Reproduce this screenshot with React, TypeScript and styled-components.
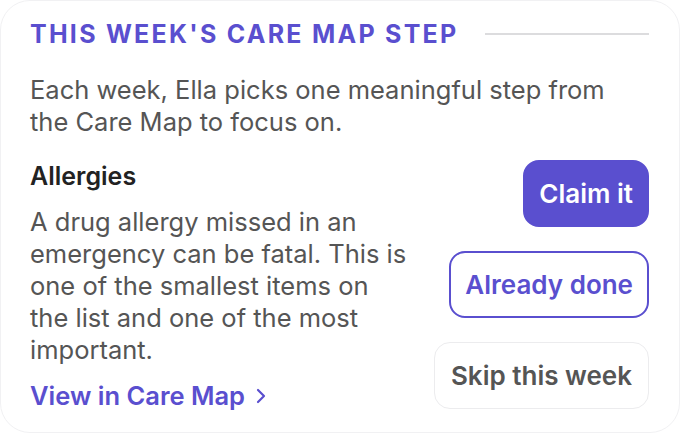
import React from "react";
import styled, { createGlobalStyle } from "styled-components";

const Global = createGlobalStyle`
  html, body { margin: 0; padding: 0; background: #ffffff; }
  body { font-family: Inter, "Noto Sans", sans-serif; -webkit-font-smoothing: antialiased; }
  * { box-sizing: border-box; }
`;

const Card = styled.section`
  width: 680px;
  height: 433px;
  background: #ffffff;
  border: 1px solid #f1f1f3;
  border-radius: 30px;
  padding: 17px 30px 0 29px;
  display: flex;
  flex-direction: column;
`;

const Header = styled.div`
  display: flex;
  align-items: center;
  gap: 26px;
`;

const Eyebrow = styled.h2`
  margin: 0;
  font-size: 25px;
  line-height: 32px;
  font-weight: 700;
  letter-spacing: 2.25px;
  color: #5a4fcf;
  white-space: nowrap;
`;

const Rule = styled.div`
  flex: 1;
  height: 2px;
  background: #dcdcde;
`;

const Intro = styled.p`
  margin: 24px 0 0;
  max-width: 600px;
  font-size: 25.5px;
  line-height: 32px;
  color: #555555;
`;

const Body = styled.div`
  display: flex;
  justify-content: space-between;
  margin-top: 22px;
`;

const Details = styled.div`
  width: 382px;
  display: flex;
  flex-direction: column;
  align-items: flex-start;
`;

const ItemTitle = styled.h3`
  margin: 1px 0 0;
  font-size: 25px;
  line-height: 30px;
  font-weight: 600;
  color: #222222;
`;

const Description = styled.p`
  margin: 15px 0 0;
  font-size: 25.5px;
  line-height: 32px;
  color: #555555;
`;

const MapLink = styled.a`
  margin-top: 15px;
  display: inline-flex;
  align-items: center;
  gap: 11px;
  font-size: 25.5px;
  line-height: 30px;
  font-weight: 600;
  color: #5a4fcf;
  text-decoration: none;
`;

const Actions = styled.div`
  display: flex;
  flex-direction: column;
  align-items: flex-end;
  gap: 24px;
`;

type Variant = "primary" | "outline" | "ghost";

const ActionButton = styled.button<{ $variant: Variant }>`
  height: 67px;
  padding: 0 ${(p) => (p.$variant === "ghost" ? "16px" : "14px")};
  border-radius: 16px;
  font-family: inherit;
  font-size: 26px;
  font-weight: 600;
  cursor: pointer;
  background: ${(p) => (p.$variant === "primary" ? "#5a4fcf" : "#ffffff")};
  color: ${(p) =>
    p.$variant === "primary" ? "#ffffff" : p.$variant === "outline" ? "#5a4fcf" : "#555555"};
  border: ${(p) =>
    p.$variant === "ghost" ? "1px solid #ececee" : "2px solid #5a4fcf"};
`;

const Chevron = () => (
  <svg width="10" height="16" viewBox="0 0 10 16" fill="none">
    <path d="M2 2l6 6-6 6" stroke="#5a4fcf" strokeWidth="2.2" strokeLinecap="round" strokeLinejoin="round" />
  </svg>
);

export default function App() {
  return (
    <>
      <Global />
      <Card>
        <Header>
          <Eyebrow>THIS WEEK'S CARE MAP STEP</Eyebrow>
          <Rule />
        </Header>
        <Intro>Each week, Ella picks one meaningful step from the Care Map to focus on.</Intro>
        <Body>
          <Details>
            <ItemTitle>Allergies</ItemTitle>
            <Description>
              A drug allergy missed in an emergency can be fatal. This is one of the smallest items on the list and one of the most important.
            </Description>
            <MapLink href="#">
              View in Care Map <Chevron />
            </MapLink>
          </Details>
          <Actions>
            <ActionButton $variant="primary">Claim it</ActionButton>
            <ActionButton $variant="outline">Already done</ActionButton>
            <ActionButton $variant="ghost">Skip this week</ActionButton>
          </Actions>
        </Body>
      </Card>
    </>
  );
}
